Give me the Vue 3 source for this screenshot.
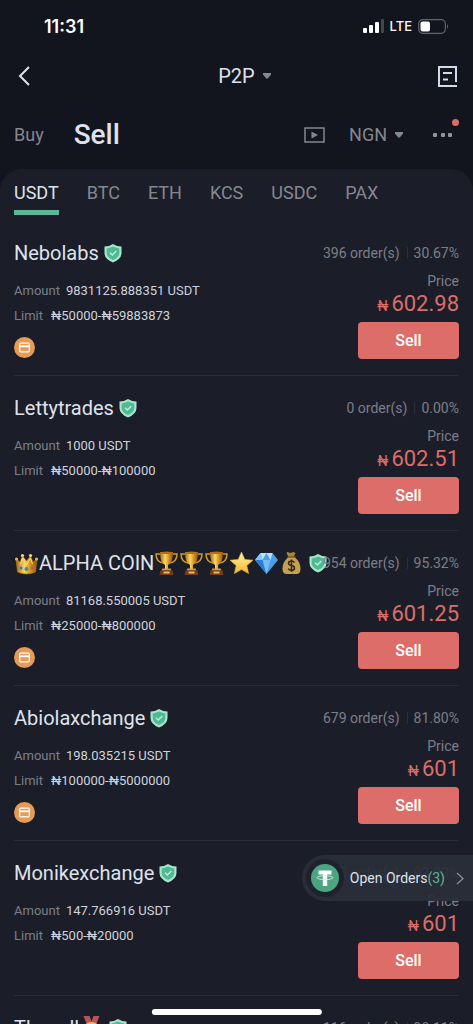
<script setup>
import { ref } from 'vue'

const coins = ['USDT', 'BTC', 'ETH', 'KCS', 'USDC', 'PAX']
const activeCoin = ref('USDT')

const offers = [
  { name: 'Nebolabs', orders: 396, rate: '30.67%', amount: '9831125.888351', limit: '₦50000-₦59883873', price: '602.98', card: true },
  { name: 'Lettytrades', orders: 0, rate: '0.00%', amount: '1000', limit: '₦50000-₦100000', price: '602.51', card: false },
  { name: 'ALPHA COIN', lead: ['crown'], trail: ['trophy', 'trophy', 'trophy', 'star', 'gem', 'bag'], orders: 954, rate: '95.32%', amount: '81168.550005', limit: '₦25000-₦800000', price: '601.25', card: true },
  { name: 'Abiolaxchange', orders: 679, rate: '81.80%', amount: '198.035215', limit: '₦100000-₦5000000', price: '601', card: true },
  { name: 'Monikexchange', orders: 145, rate: '93.00%', amount: '147.766916', limit: '₦500-₦20000', price: '601', card: false },
  { name: 'Thanell', trail: ['medal'], orders: 116, rate: '98.11%', amount: '520.114', limit: '₦5000-₦90000', price: '601', card: false },
]
</script>

<template>
  <div class="app">
    <svg class="defs" aria-hidden="true">
      <defs>
        <linearGradient id="gold" x1="0" x2="1" y1="0" y2="0">
          <stop offset="0" stop-color="#a86a12" /><stop offset=".4" stop-color="#f8d568" /><stop offset=".65" stop-color="#d99a27" /><stop offset="1" stop-color="#8f560c" />
        </linearGradient>
        <linearGradient id="sun" x1="0" x2="0" y1="0" y2="1">
          <stop offset="0" stop-color="#fff3a8" /><stop offset="1" stop-color="#f3b52c" />
        </linearGradient>
        <symbol id="crown" viewBox="0 0 24 24">
          <path d="M1.500 8l4 3 2.500-6 4 5 4-5 2.500 6 4-3-1.500 13q-9 4-18 0z" fill="url(#gold)" stroke="#b27a1c" stroke-width=".6" />
          <path d="M6 13l2-6 4 7 4-7 2 6" fill="none" stroke="#f7dc83" stroke-width="1" />
          <circle cx="2" cy="8" r="1.500" fill="#eabf52" /><circle cx="8" cy="4.500" r="1.600" fill="#f5d77c" /><circle cx="16" cy="4.500" r="1.600" fill="#f5d77c" /><circle cx="22" cy="8" r="1.500" fill="#eabf52" />
          <circle cx="12" cy="18" r="2" fill="#30a079" /><circle cx="6.500" cy="17" r="1.500" fill="#3877bf" /><circle cx="17.500" cy="17" r="1.500" fill="#d14f56" />
        </symbol>
        <symbol id="trophy" viewBox="0 0 24 24">
          <path d="M6 3H1.500q0 8 7.500 9M18 3h4.500q0 8-7.500 9" fill="none" stroke="#d3982c" stroke-width="1.500" />
          <path d="M5.500 1h13q0 11-5 13v4h-3v-4q-5-2-5-13z" fill="url(#gold)" />
          <ellipse cx="12" cy="1.800" rx="6.500" ry="1.200" fill="#ad721b" />
          <path d="M8 17.500h8l1 2H7z" fill="#dba234" /><path d="M6 19.500h12l1 4.500H5z" fill="#7c371a" /><path d="M9 20.500h6v2H9z" fill="#e4bd6c" />
        </symbol>
        <symbol id="star" viewBox="0 0 24 24">
          <path d="M12 1l3.300 7.400 8.200.8-6.200 5.400 1.800 8-7.100-4.200-7.100 4.200 1.800-8L.5 9.200l8.200-.8z" fill="url(#sun)" stroke="#e9b33d" stroke-width=".6" stroke-linejoin="round" />
        </symbol>
        <symbol id="gem" viewBox="0 0 24 24">
          <path d="M6 2h12l5.500 7L12 23 .5 9z" fill="#4b9fe6" /><path d="M6 2l2 7L12 2l4 7 2-7z" fill="#b9e2fb" /><path d="M.5 9H8l4 14z" fill="#2c7fd0" /><path d="M8 9h8l-4 14z" fill="#73bdf3" /><path d="M6 2l2 7H.5z" fill="#83c8f7" />
        </symbol>
        <symbol id="bag" viewBox="0 0 24 24">
          <path d="M8 1l3 1 3-1 2 1-2 4H9L7 2z" fill="#a8853e" /><path d="M9 6h6q6 5 6 12 0 5-4 5H7q-4 0-4-5 0-7 6-12z" fill="#c3a154" /><path d="M8 6h8" stroke="#7b5721" stroke-width="1.500" />
          <path d="M15 11.500q-1-1.500-3-1.500-3 0-3 2.300 0 1.700 3 2.200t3 2.500q0 2.400-3 2.400-2.300 0-3.300-1.700M12 8.500v12.500" fill="none" stroke="#33260f" stroke-width="1.500" />
        </symbol>
        <symbol id="medal" viewBox="0 0 24 24">
          <path d="M4 0h6l3 8-5 2zM20 0h-6l-3 8 5 2z" fill="#bb535b" /><circle cx="12" cy="15" r="9" fill="#f2b75d" /><circle cx="12" cy="15" r="6.500" fill="#ffd894" />
        </symbol>
        <symbol id="shield" viewBox="0 0 18 20">
          <path d="M9 1q4 2.500 8.500 2.500V10q0 6-8.500 9.500Q.5 16 .5 10V3.500Q5 3.500 9 1z" fill="#a5e6cb" />
          <path d="M9 3.500q3.200 1.700 6.300 1.900V10q0 4.300-6.300 7.100Q2.700 14.300 2.700 10V5.400Q5.800 5.200 9 3.500z" fill="#51b893" />
          <path d="M6 9.700l2.300 2.300 4-4" fill="none" stroke="#b7f0d8" stroke-width="1.500" />
        </symbol>
      </defs>
    </svg>

    <div class="status">
      <span class="time">11:31</span>
      <div class="signals">
        <svg width="21" height="14" viewBox="0 0 21 14" aria-hidden="true">
          <rect x="0" y="9" width="4" height="5" rx="1" fill="#fff" /><rect x="6" y="6" width="4" height="8" rx="1" fill="#fff" /><rect x="12" y="3" width="4" height="11" rx="1" fill="#fff" /><rect x="18" y="0" width="3" height="14" rx="1" fill="#44464e" />
        </svg>
        <span class="lte">LTE</span>
        <svg width="31" height="15" viewBox="0 0 31 15" aria-hidden="true">
          <rect x=".7" y=".7" width="26.600" height="13.600" rx="4" fill="none" stroke="#62646c" stroke-width="1.200" /><rect x="2.500" y="2.500" width="9.500" height="10" rx="2" fill="#fff" /><path d="M29 5q2 2.500 0 5z" fill="#62646c" />
        </svg>
      </div>
    </div>

    <header class="bar">
      <button class="icon" aria-label="Back">
        <svg width="12" height="20" viewBox="0 0 12 20"><path d="M11 1L2 10l9 9" fill="none" stroke="#dfe2ee" stroke-width="2" /></svg>
      </button>
      <button class="title">P2P <svg width="8" height="6" viewBox="0 0 8 6" aria-hidden="true"><path d="M0 0h8v1.500L4.800 5.500H3.200L0 1.500z" fill="#85878f" /></svg></button>
      <button class="icon end" aria-label="Orders">
        <svg width="19" height="21" viewBox="0 0 19 21" fill="none" stroke="#d3d9ec" stroke-width="2"><path d="M18 16V1H1v19h18M5 7h9M5 13.500h5" /></svg>
      </button>
    </header>

    <div class="modes">
      <button class="buy">Buy</button>
      <h1>Sell</h1>
      <button class="icon video" aria-label="Tutorial">
        <svg width="21" height="16" viewBox="0 0 21 16"><rect x="1" y="1" width="19" height="14" fill="none" stroke="#85878f" stroke-width="1.500" /><path d="M7.500 4.500l6.500 3.500-6.500 3.500z" fill="#85878f" /></svg>
      </button>
      <button class="currency">NGN <svg width="8" height="6" viewBox="0 0 8 6" aria-hidden="true"><path d="M0 0h8v1.500L4.800 5.500H3.200L0 1.500z" fill="#85878f" /></svg></button>
      <button class="icon more" aria-label="More">
        <svg width="20" height="4" viewBox="0 0 20 4" fill="#92949c"><rect x="0" width="4" height="4" rx="1" /><rect x="8" width="4" height="4" rx="1" /><rect x="15" width="4" height="4" rx="1" /></svg>
        <span class="dot"></span>
      </button>
    </div>

    <main class="sheet">
      <nav class="coins">
        <button v-for="c in coins" :key="c" :class="{ active: c === activeCoin }" @click="activeCoin = c">{{ c }}</button>
      </nav>
      <section class="list">
        <article v-for="o in offers" :key="o.name" class="offer">
          <div class="info">
            <h2>
              <svg v-for="(e, i) in o.lead" :key="'l' + i" class="emoji" aria-hidden="true"><use :href="'#' + e" /></svg>
              <span>{{ o.name }}</span>
              <svg v-for="(e, i) in o.trail" :key="'t' + i" class="emoji" aria-hidden="true"><use :href="'#' + e" /></svg>
              <svg class="shield" aria-hidden="true"><use href="#shield" /></svg>
            </h2>
            <p><span class="label">Amount</span>{{ o.amount }} USDT</p>
            <p><span class="label limit">Limit</span>{{ o.limit }}</p>
            <svg v-if="o.card" class="card" viewBox="0 0 21 21" aria-label="Bank card"><circle cx="10.500" cy="10.500" r="10.500" fill="#e79b56" /><rect x="5.700" y="6.200" width="9.600" height="8.600" rx="1" fill="none" stroke="#fff" stroke-width="1.200" /><path d="M5.500 9.300h10" stroke="#fff" stroke-width="1.800" /></svg>
          </div>
          <div class="deal">
            <div class="stats"><span>{{ o.orders }} order(s)</span><span class="rate">{{ o.rate }}</span></div>
            <div class="price-label">Price</div>
            <div class="price"><small>₦</small>{{ o.price }}</div>
            <button class="sell">Sell</button>
          </div>
        </article>
      </section>
    </main>

    <a class="open-orders" href="#">
      <span class="coin">
        <svg width="28" height="28" viewBox="0 0 28 28" aria-hidden="true"><circle cx="14" cy="14" r="14" fill="#4aa580" /><path d="M7.500 6.500h13v4h-4.300v11.500h-4.400V10.500H7.500z" fill="#fff" /><ellipse cx="14" cy="13.700" rx="8" ry="1.900" fill="none" stroke="#d8f0e5" stroke-width=".9" /></svg>
      </span>
      <span>Open Orders<span class="count">(3)</span></span>
      <svg class="go" width="8" height="13" viewBox="0 0 8 13" aria-hidden="true"><path d="M1 1l6 5.500L1 12" fill="none" stroke="#8b8e97" stroke-width="1.300" /></svg>
    </a>
    <div class="home"></div>
  </div>
</template>

<style>
body { background: #12151e; }
</style>

<style scoped>
.app {
  height: 100vh;
  overflow: hidden;
  position: relative;
  display: flex;
  flex-direction: column;
  background: #12151e;
  color: #dfe2ee;
  font-family: Roboto, "Noto Sans", sans-serif;
}
.defs { position: absolute; width: 0; height: 0; }
button {
  font: inherit;
  color: inherit;
  background: none;
  border: 0;
  padding: 0;
}
svg { flex: none; }
h1, h2, p { margin: 0; font-weight: 400; }
.status {
  display: flex;
  justify-content: space-between;
  align-items: center;
  height: 52px;
  padding: 0 24px 0 44px;
  color: #fff;
  font-family: Inter, sans-serif;
  flex: none;
}
.time { font-size: 18px; font-weight: 600; }
.signals { display: flex; align-items: center; gap: 6px; }
.lte { font-size: 13px; font-weight: 500; }
.bar {
  display: grid;
  grid-template-columns: 1fr auto 1fr;
  align-items: center;
  height: 48px;
  padding: 0 16px 0 18px;
  flex: none;
}
.icon { display: flex; align-items: center; }
.end { justify-self: end; }
.title, .currency { display: flex; align-items: center; gap: 8px; }
.title { font-size: 20px; padding-left: 14px; }
.modes {
  display: flex;
  align-items: center;
  height: 69px;
  padding: 0 20px 0 14px;
  color: #85878f;
  flex: none;
}
.buy { font-size: 18px; }
.modes h1 { font-size: 28px; line-height: 32px; font-weight: 500; margin-left: 30px; color: #dfe2ee; }
.video { margin-left: auto; }
.currency { margin-left: 24px; font-size: 18px; }
.more { position: relative; margin-left: 30px; }
.dot {
  position: absolute;
  right: -6px;
  top: -14px;
  width: 7px;
  height: 7px;
  border-radius: 50%;
  background: #dc6d68;
}
.sheet {
  flex: 1;
  min-height: 0;
  display: flex;
  flex-direction: column;
  background: #1b1e28;
  border-radius: 22px 22px 0 0;
}
.coins {
  display: flex;
  gap: 28px;
  padding: 6px 14px;
  flex: none;
}
.coins button {
  font-size: 18px;
  line-height: 35px;
  color: #85878f;
  border-bottom: 5px solid transparent;
}
.coins .active { color: #dfe2ee; border-color: #5cb797; }
.list { padding: 0 14px; overflow: hidden; flex: 1; }
.offer {
  display: flex;
  justify-content: space-between;
  padding: 18px 0 16px;
  border-bottom: 1px solid #292d38;
}
.info { flex: 1; min-width: 0; white-space: nowrap; }
h2 {
  display: flex;
  align-items: center;
  font-size: 20px;
  line-height: 28px;
  margin-bottom: 11px;
}
.emoji { width: 25px; height: 24px; }
.shield { width: 18px; height: 20px; margin-left: 5px; }
p { font-size: 13px; line-height: 25px; color: #cfd2de; }
.label { color: #7b7e88; margin-right: 6px; }
.limit { margin-right: 8px; }
.card { display: block; width: 21px; height: 21px; margin-top: 9px; }
.deal {
  display: flex;
  flex-direction: column;
  align-items: flex-end;
  flex: none;
  color: #7b7e88;
}
.stats { display: flex; align-items: center; font-size: 14px; line-height: 28px; }
.rate { line-height: 12px; margin-left: 7px; padding-left: 6px; border-left: 1px solid #2b2f39; }
.price-label { font-size: 14px; line-height: 20px; margin-top: 4px; }
.price {
  display: flex;
  align-items: baseline;
  height: 26px;
  font-size: 22px;
  line-height: 26px;
  color: #dc6d68;
}
.price small { font-size: 14px; line-height: 16px; margin-right: 3px; }
.sell {
  width: 101px;
  height: 37px;
  margin-top: 5px;
  border-radius: 4px;
  background: #dc6d68;
  color: #fff;
  font-size: 16px;
  font-weight: 500;
}
.open-orders {
  position: absolute;
  right: 0;
  bottom: 123px;
  display: flex;
  align-items: center;
  height: 46px;
  padding: 0 9px 0 4px;
  border-radius: 23px 0 0 23px;
  background: rgba(43, 47, 57, 0.94);
  color: #dfe2ee;
  font-size: 14px;
  text-decoration: none;
}
.coin {
  display: flex;
  padding: 5px;
  margin-right: 6px;
  border-radius: 50%;
  background: #1f222c;
}
.count { color: #5cb797; }
.go { margin-left: 11px; }
.home {
  position: absolute;
  left: 50%;
  bottom: 9px;
  width: 36%;
  height: 6px;
  border-radius: 3px;
  background: #fff;
  transform: translateX(-50%);
}
</style>
